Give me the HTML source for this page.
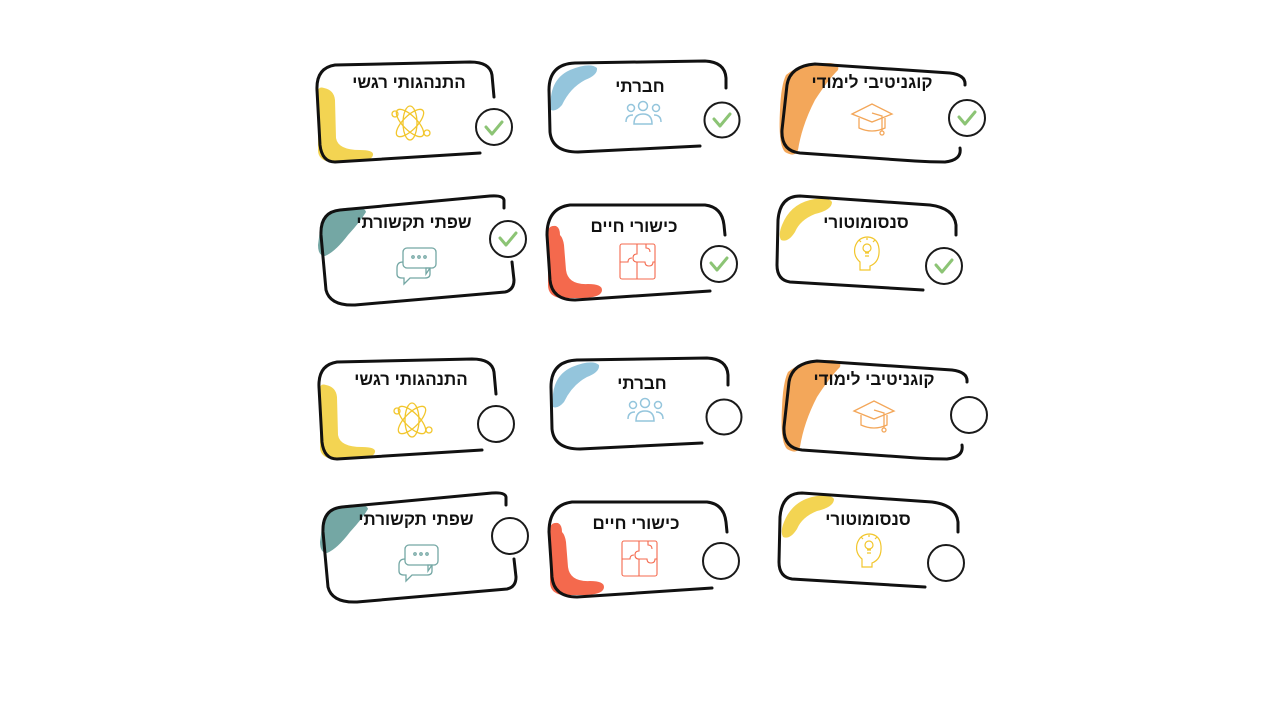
<!DOCTYPE html>
<html><head><meta charset="utf-8"><style>
html,body{margin:0;padding:0;background:#fff;width:1280px;height:720px;overflow:hidden}
svg text{font-family:"Liberation Sans","Noto Sans CJK SC",sans-serif;font-weight:bold;font-size:17px;fill:#111;text-anchor:middle}
</style></head><body>
<svg width="1280" height="720" viewBox="0 0 1280 720" xmlns="http://www.w3.org/2000/svg">
<defs>
<g id="cards">
 <!-- card1 -->
 <path d="M318 92 Q318 86 324 88 Q334 90 335 100 L336 138 Q338 150 360 150 Q374 150 373 155 Q372 162 350 162 L330 162 Q318 160 318 150 Z" fill="#f3d452"/>
 <path d="M480 153 L335 162 Q322 162 320 145 L317 90 Q316 68 335 65 L470 62 Q490 62 492 75 L494 97" fill="none" stroke="#111" stroke-width="3" stroke-linecap="round"/>
 <text x="409" y="88">התנהגותי רגשי</text>
 <g fill="none" stroke="#f2c62c" stroke-width="1.3">
  <ellipse cx="410" cy="123" rx="18" ry="7" transform="rotate(45 410 123)"/>
  <ellipse cx="410" cy="123" rx="18" ry="7" transform="rotate(-45 410 123)"/>
  <ellipse cx="410" cy="123" rx="7" ry="17"/>
  <circle cx="395" cy="114" r="3"/><circle cx="427" cy="133" r="3"/>
 </g>
 <!-- card2 -->
 <path d="M551 110 Q548 80 570 70 Q590 62 597 68 Q598 75 585 80 Q570 88 562 105 Q556 112 551 110 Z" fill="#94c5dc"/>
 <path d="M700 146 L578 152 Q552 152 550 132 L549 90 Q549 64 575 63 L705 61 Q725 62 726 78 L726 88" fill="none" stroke="#111" stroke-width="3" stroke-linecap="round"/>
 <text x="640" y="92">חברתי</text>
 <g fill="none" stroke="#94c5dc" stroke-width="1.5">
  <circle cx="631" cy="108" r="3.5"/><circle cx="643" cy="106" r="4.5"/><circle cx="656" cy="108" r="3.5"/>
  <path d="M634 124 Q634 114 643 114 Q652 114 652 124 Z"/>
  <path d="M626 122 Q626 115 633 115 M661 122 Q661 115 654 115"/>
 </g>
 <!-- card3 -->
 <path d="M786 75 Q800 63 830 63 Q840 64 838 70 Q828 80 815 100 Q802 125 798 150 Q795 158 785 152 Q778 145 780 110 Q781 85 786 75 Z" fill="#f3a75a"/>
 <path d="M945 162 Q930 162 915 161 L800 153 Q781 151 782 130 L787 85 Q790 66 815 64 L950 73 Q966 75 965 85 M960 148 Q962 160 945 162" fill="none" stroke="#111" stroke-width="3" stroke-linecap="round"/>
 <text x="872" y="88">קוגניטיבי לימודי</text>
 <g fill="none" stroke="#f3a75a" stroke-width="1.3">
  <path d="M852 114 L872 104 L892 114 L872 122 Z"/>
  <path d="M859 118 L859 128 Q872 134 885 128 L885 118"/>
  <path d="M872 113 L882 116 L882 131"/><circle cx="882" cy="133" r="2"/>
 </g>
 <!-- card4 -->
 <path d="M321 222 Q330 210 345 208 Q365 206 366 212 Q360 222 348 235 Q335 252 325 256 Q318 256 318 245 Z" fill="#74a7a4"/>
 <path d="M504 208 L504 200 Q503 195 490 196 L340 210 Q320 212 321 235 L326 290 Q330 306 355 305 L505 292 Q514 290 514 280 L512 262" fill="none" stroke="#111" stroke-width="3" stroke-linecap="round"/>
 <text x="414" y="228">שפתי תקשורתי</text>
 <g fill="none" stroke="#74a7a4" stroke-width="1.3">
  <rect x="403" y="248" width="33" height="20" rx="4"/>
  <path d="M403 262 Q397 262 397 268 L397 274 Q397 278 402 278 L404 278 L404 284 L410 278 L425 278 Q430 278 430 274 L430 268 L426 268 L426 274 L430 268"/>
  <circle cx="413" cy="257" r="1.2"/><circle cx="419" cy="257" r="1.2"/><circle cx="425" cy="257" r="1.2"/>
 </g>
 <!-- card5 -->
 <path d="M548 230 Q550 225 556 226 Q560 228 560 235 Q563 238 564 245 L566 270 Q568 285 588 284 Q602 284 602 290 Q602 297 585 298 L560 298 Q548 296 548 285 Z" fill="#f4694d"/>
 <path d="M710 291 L575 300 Q552 300 550 280 L547 235 Q547 208 570 205 L705 205 Q722 207 724 225 L725 235" fill="none" stroke="#111" stroke-width="3" stroke-linecap="round"/>
 <text x="634" y="232">כישורי חיים</text>
 <g fill="none" stroke="#f4694d" stroke-width="1.1">
  <rect x="620" y="244" width="35" height="35" rx="2"/>
  <path d="M637 244 L637 254 Q633 254 633 258 Q633 262 637 262 L637 279 M620 262 L628 262 Q628 258 632 258 M637 262 L645 262 Q645 266 649 266 Q653 266 653 262 L655 262 M646 244 L646 248 Q650 248 650 252"/>
 </g>
 <!-- card6 -->
 <path d="M782 225 Q790 205 810 200 Q828 196 832 202 Q832 210 815 214 Q800 220 795 232 Q788 243 781 240 Q778 235 782 225 Z" fill="#f3d452"/>
 <path d="M923 290 L790 282 Q777 280 777 265 L778 220 Q780 196 800 196 L930 205 Q954 208 956 225 L956 235" fill="none" stroke="#111" stroke-width="3" stroke-linecap="round"/>
 <text x="866" y="228">סנסומוטורי</text>
 <g fill="none" stroke="#f2c62c" stroke-width="1.2">
  <path d="M860 270 L860 262 Q853 256 855 247 Q858 237 868 237 Q878 238 879 249 Q880 262 870 266 L870 270 Z"/>
  <circle cx="867" cy="248" r="4"/><path d="M865 253 L869 253 M865 256 L869 256 M861 242 L859 240 M873 242 L875 240 M867 240 L867 238"/>
 </g>
</g>
<g id="circ">
 <circle cx="494" cy="127" r="18"/><circle cx="722" cy="120" r="17.5"/><circle cx="967" cy="118" r="18"/>
 <circle cx="508" cy="239" r="18"/><circle cx="719" cy="264" r="18"/><circle cx="944" cy="266" r="18"/>
</g>
<g id="chk">
 <path d="M486 127 L492 134 L502 122"/><path d="M714 119 L720 126 L730 114"/><path d="M959 117 L965 124 L975 112"/>
 <path d="M500 238 L506 245 L516 233"/><path d="M711 263 L717 270 L727 258"/><path d="M936 265 L942 272 L952 260"/>
</g>
</defs>
<use href="#cards"/>
<use href="#circ" fill="#fff" stroke="#1a1a1a" stroke-width="2"/>
<use href="#chk" fill="none" stroke="#8cc475" stroke-width="3" stroke-linecap="round" stroke-linejoin="round"/>
<g transform="translate(2,297)">
 <use href="#cards"/>
 <use href="#circ" fill="#fff" stroke="#1a1a1a" stroke-width="2"/>
</g>
</svg>
</body></html>
